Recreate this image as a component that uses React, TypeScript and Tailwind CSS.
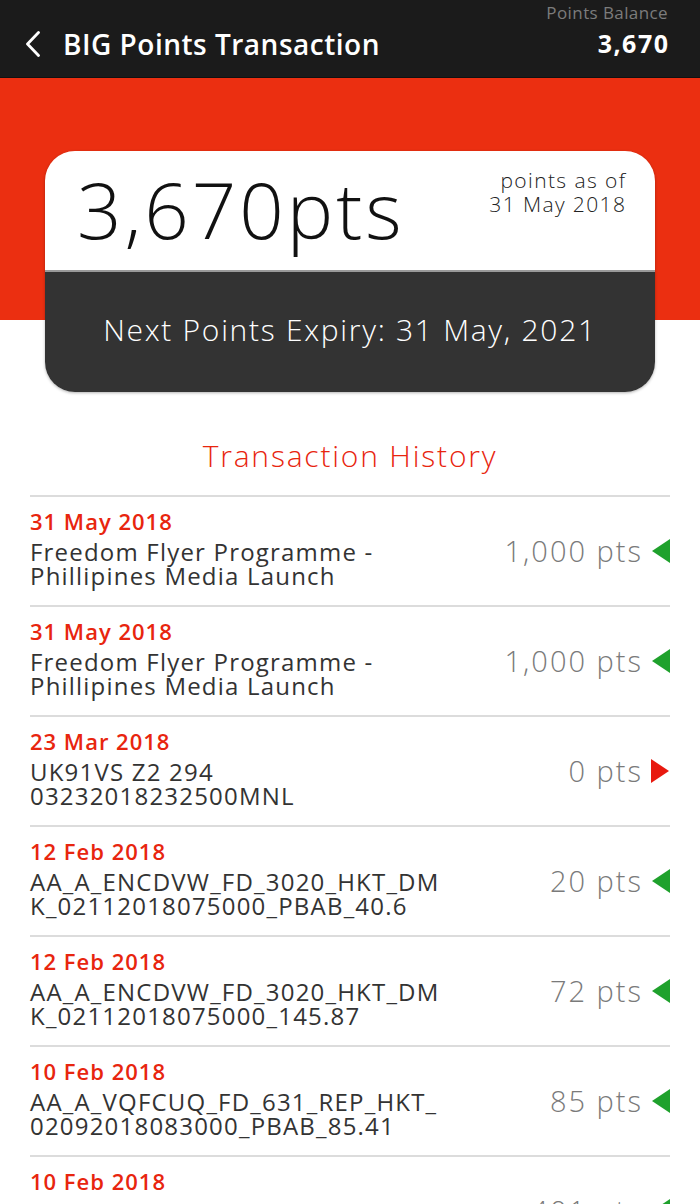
import React from "react";

type Tx = { date: string; l1: string; l2: string; pts: string; dir: "in" | "out" };

const txs: Tx[] = [
  { date: "31 May 2018", l1: "Freedom Flyer Programme -", l2: "Phillipines Media Launch", pts: "1,000 pts", dir: "in" },
  { date: "31 May 2018", l1: "Freedom Flyer Programme -", l2: "Phillipines Media Launch", pts: "1,000 pts", dir: "in" },
  { date: "23 Mar 2018", l1: "UK91VS Z2 294", l2: "03232018232500MNL", pts: "0 pts", dir: "out" },
  { date: "12 Feb 2018", l1: "AA_A_ENCDVW_FD_3020_HKT_DM", l2: "K_02112018075000_PBAB_40.6", pts: "20 pts", dir: "in" },
  { date: "12 Feb 2018", l1: "AA_A_ENCDVW_FD_3020_HKT_DM", l2: "K_02112018075000_145.87", pts: "72 pts", dir: "in" },
  { date: "10 Feb 2018", l1: "AA_A_VQFCUQ_FD_631_REP_HKT_", l2: "02092018083000_PBAB_85.41", pts: "85 pts", dir: "in" },
  { date: "10 Feb 2018", l1: "AA_A_VQFCUQ_FD_631_REP_HKT_", l2: "02092018083000_PBAB_401.2", pts: "401 pts", dir: "in" },
];

function Arrow({ dir }: { dir: "in" | "out" }) {
  return dir === "in" ? (
    <svg width="19" height="24" viewBox="0 0 19 24" className="shrink-0">
      <path d="M19 0 L1 12 L19 24 Z" fill="#1fa12c" />
    </svg>
  ) : (
    <svg width="19" height="24" viewBox="0 0 19 24" className="shrink-0">
      <path d="M0 0 L18 12 L0 24 Z" fill="#e8190f" />
    </svg>
  );
}

export default function App() {
  return (
    <div
      className="w-[700px] h-[1204px] overflow-hidden bg-white"
      style={{ fontFamily: '"Open Sans", "Liberation Sans", sans-serif' }}
    >
      {/* Header */}
      <div className="h-[78px] bg-[#1b1b1b] border-b border-[#111] flex justify-between pl-[24px] pr-[32px]">
        <div className="flex items-center gap-[21px] self-end pb-[17px]">
          <svg width="18" height="26" viewBox="0 0 18 26" className="mb-[1px]">
            <path d="M14.5 1.5 L3.5 13 L14.5 24.5" stroke="#fff" strokeWidth="2.8" fill="none" strokeLinecap="round" strokeLinejoin="round" />
          </svg>
          <span className="text-white text-[28px] font-semibold leading-[32px] tracking-[0.5px]">BIG Points Transaction</span>
        </div>
        <div className="flex flex-col items-end pt-[3px]">
          <span className="text-[#7c7c7c] text-[17px] leading-[20px] tracking-[0.4px]">Points Balance</span>
          <span className="text-white text-[25px] font-bold leading-[30px] mt-[5px] tracking-[1.5px] -mr-[1.5px]">3,670</span>
        </div>
      </div>

      {/* Balance section */}
      <div className="bg-[linear-gradient(#eb2f11_0px,#eb2f11_242px,#ffffff_242px)] pt-[73px] flex justify-center">
        <div className="w-[610px] rounded-[30px] overflow-hidden shadow-[0_1px_3px_rgba(0,0,0,0.3)]">
          <div className="h-[121px] bg-white flex justify-between pl-[32px] pr-[30px] border-b-2 border-[#9a9a9a]">
            <span className="text-[#111] text-[78px] font-light leading-[80px] mt-[18px] tracking-[3px]">3,670pts</span>
            <div className="flex flex-col items-end mt-[17px] text-[#222] text-[21px] font-light leading-[24px] tracking-[1.4px] -mr-[1.4px]">
              <span>points as of</span>
              <span>31 May 2018</span>
            </div>
          </div>
          <div className="h-[120px] bg-[#333333] flex items-center justify-center pb-[4px]">
            <span className="text-white text-[30px] font-light leading-[36px] tracking-[1.7px]">Next Points Expiry: 31 May, 2021</span>
          </div>
        </div>
      </div>

      {/* Transaction history */}
      <div className="text-center text-[#e8250e] text-[30px] font-light leading-[36px] mt-[46px] tracking-[1.8px]">Transaction History</div>

      <div className="mx-[30px] mt-[21px]">
        {txs.map((t, i) => (
          <div key={i} className="h-[110px] border-t-2 border-[#dcdcdc] flex items-center justify-between">
            <div className="flex flex-col self-start pt-[11px]">
              <span className="text-[#e8250e] text-[22px] font-semibold leading-[26px] tracking-[1px]">{t.date}</span>
              <span className="text-[#333] text-[24px] font-medium leading-[24px] mt-[6px] tracking-[1.2px]">{t.l1}</span>
              <span className="text-[#333] text-[24px] font-medium leading-[24px] tracking-[1.2px]">{t.l2}</span>
            </div>
            <div className="flex items-center gap-[8px]">
              <span className="text-[#7a7a7a] text-[29px] font-light leading-[32px] tracking-[2px]">{t.pts}</span>
              <Arrow dir={t.dir} />
            </div>
          </div>
        ))}
      </div>
    </div>
  );
}
